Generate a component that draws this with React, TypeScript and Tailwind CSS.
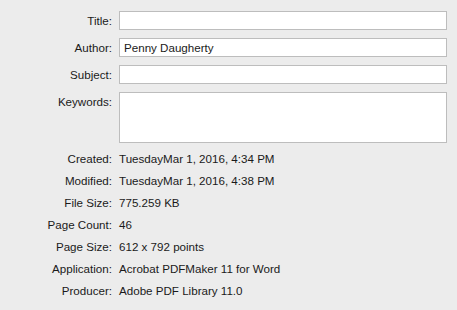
import React from "react";

const fields = [
  { label: "Title:", value: "" },
  { label: "Author:", value: "Penny Daugherty" },
  { label: "Subject:", value: "" },
];

const info = [
  { label: "Created:", value: "TuesdayMar 1, 2016, 4:34 PM" },
  { label: "Modified:", value: "TuesdayMar 1, 2016, 4:38 PM" },
  { label: "File Size:", value: "775.259 KB" },
  { label: "Page Count:", value: "46" },
  { label: "Page Size:", value: "612 x 792 points" },
  { label: "Application:", value: "Acrobat PDFMaker 11 for Word" },
  { label: "Producer:", value: "Adobe PDF Library 11.0" },
];

const App: React.FC = () => {
  return (
    <div
      className="w-[457px] h-[310px] bg-[#ececec] pt-[11px] pr-[10px] text-[11.6px] text-[#1a1a1a] overflow-hidden"
      style={{ fontFamily: '"Liberation Sans", Arial, sans-serif' }}
    >
      {/* Editable fields */}
      <div className="flex flex-col gap-[8px]">
        {fields.map((f) => (
          <div key={f.label} className="flex items-center gap-[7px]">
            <label className="w-[112px] text-right leading-[19px]">{f.label}</label>
            <input
              type="text"
              defaultValue={f.value}
              className="flex-1 h-[19px] bg-white border border-[#bdbdbd] px-[4px] outline-none text-[#1a1a1a]"
            />
          </div>
        ))}
        <div className="flex items-start gap-[7px]">
          <label className="w-[112px] text-right leading-[19px]">Keywords:</label>
          <textarea className="flex-1 h-[51px] bg-white border border-[#bdbdbd] px-[4px] outline-none resize-none" />
        </div>
      </div>

      {/* Document info */}
      <div className="flex flex-col mt-[5px]">
        {info.map((r) => (
          <div key={r.label} className="flex items-center gap-[7px] h-[22px]">
            <span className="w-[112px] text-right">{r.label}</span>
            <span>{r.value}</span>
          </div>
        ))}
      </div>
    </div>
  );
};

export default App;
